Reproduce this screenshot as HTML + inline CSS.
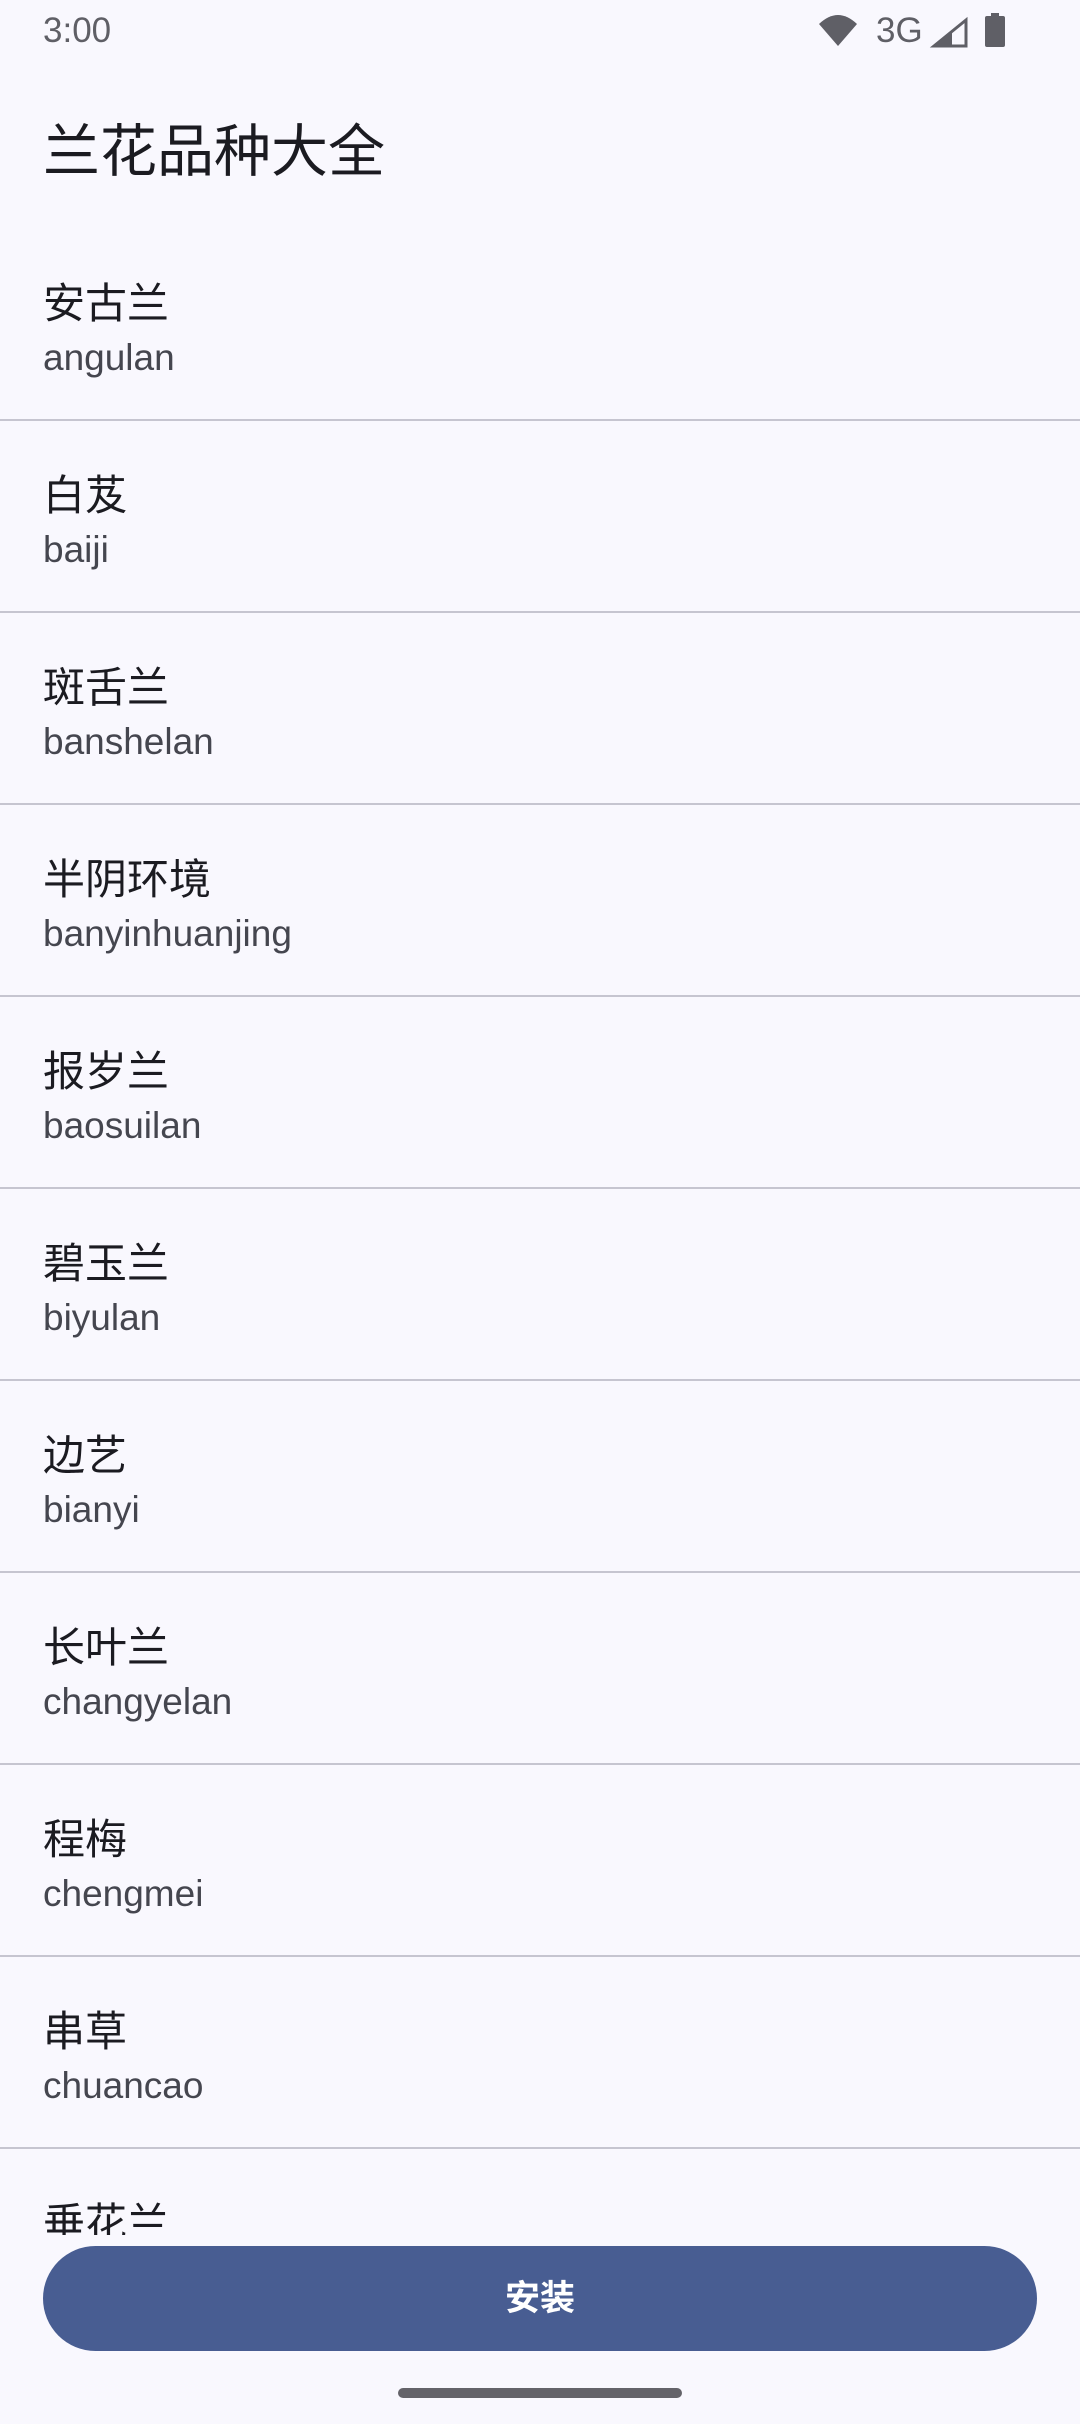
<!DOCTYPE html>
<html><head><meta charset="utf-8"><style>
*{margin:0;padding:0;box-sizing:border-box}
body{width:1080px;height:2424px;background:#f9f8fe;position:relative;overflow:hidden;font-family:"Liberation Sans","Noto Sans CJK SC",sans-serif}
.a{position:absolute;white-space:nowrap}
.t{left:43px;font-size:42px;line-height:56px;color:#1b1b21}
.s{left:43px;font-size:37px;line-height:48px;color:#45464f}
.d{left:0;width:1080px;height:2px;background:#c6c5d0}
</style></head><body>
<div class="a" style="left:43px;top:8px;font-size:35px;line-height:46px;color:#5f5f66">3:00</div>
<svg class="a" style="left:815px;top:10px" width="200" height="40" viewBox="815 10 200 40">
<path d="M819 24 Q838 6 857 24 L838 46 Z" fill="#5f5f66"/>
<text x="876" y="42" font-size="35" fill="#5f5f66" font-family="Liberation Sans">3G</text>
<path d="M934 46 L966 20 L966 46 Z" fill="none" stroke="#5f5f66" stroke-width="3"/>
<path d="M934 46 L952 31 L952 46 Z" fill="#5f5f66"/>
<rect x="985" y="16" width="20" height="31" rx="2" fill="#5f5f66"/>
<rect x="991" y="13" width="8" height="4" fill="#5f5f66"/>
</svg>
<div class="a" style="left:43px;top:116px;font-size:57px;line-height:72px;color:#1b1b21">兰花品种大全</div>
<div style="position:absolute;left:0;top:0;width:1080px;height:2235px;overflow:hidden">
<div class="a t" style="top:276px">安古兰</div><div class="a s" style="top:334px">angulan</div><div class="a d" style="top:419px"></div>
<div class="a t" style="top:468px">白芨</div><div class="a s" style="top:526px">baiji</div><div class="a d" style="top:611px"></div>
<div class="a t" style="top:660px">斑舌兰</div><div class="a s" style="top:718px">banshelan</div><div class="a d" style="top:803px"></div>
<div class="a t" style="top:852px">半阴环境</div><div class="a s" style="top:910px">banyinhuanjing</div><div class="a d" style="top:995px"></div>
<div class="a t" style="top:1044px">报岁兰</div><div class="a s" style="top:1102px">baosuilan</div><div class="a d" style="top:1187px"></div>
<div class="a t" style="top:1236px">碧玉兰</div><div class="a s" style="top:1294px">biyulan</div><div class="a d" style="top:1379px"></div>
<div class="a t" style="top:1428px">边艺</div><div class="a s" style="top:1486px">bianyi</div><div class="a d" style="top:1571px"></div>
<div class="a t" style="top:1620px">长叶兰</div><div class="a s" style="top:1678px">changyelan</div><div class="a d" style="top:1763px"></div>
<div class="a t" style="top:1812px">程梅</div><div class="a s" style="top:1870px">chengmei</div><div class="a d" style="top:1955px"></div>
<div class="a t" style="top:2004px">串草</div><div class="a s" style="top:2062px">chuancao</div><div class="a d" style="top:2147px"></div>
<div class="a t" style="top:2196px">垂花兰</div>
</div>
<div class="a" style="left:43px;top:2246px;width:994px;height:105px;border-radius:53px;background:#485d92;color:#fff;font-size:35px;font-weight:bold;line-height:105px;text-align:center">安装</div>
<div class="a" style="left:398px;top:2388px;width:284px;height:10px;border-radius:5px;background:#646369"></div>
</body></html>
